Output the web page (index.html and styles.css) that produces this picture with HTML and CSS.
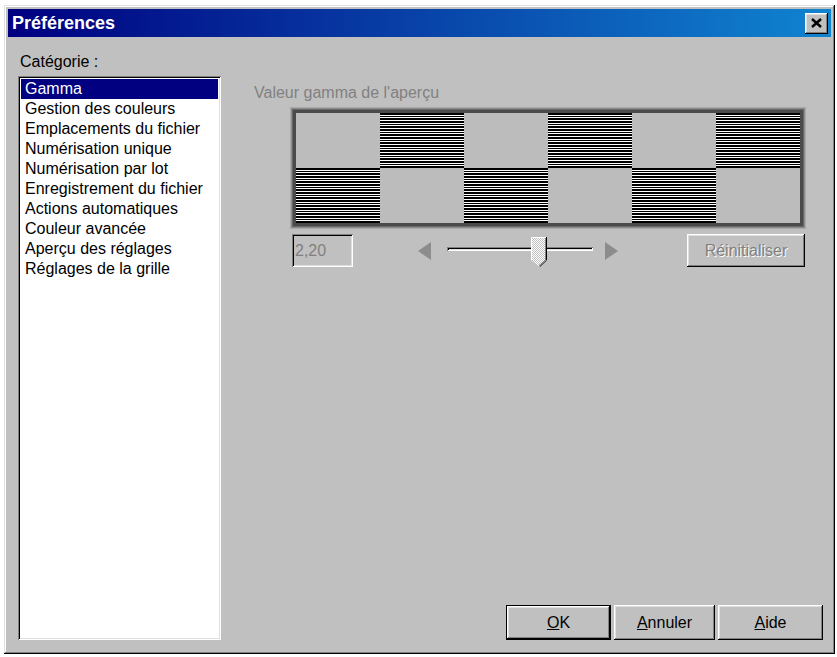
FILE: index.html
```html
<!DOCTYPE html>
<html lang="fr">
<head>
<meta charset="utf-8">
<title>Préférences</title>
<link rel="stylesheet" href="styles.css">
</head>
<body>
<div class="window">
  <div class="titlebar">
    <span class="title">Préférences</span>
    <div class="close">
      <svg width="11" height="10" viewBox="0 0 11 10"><path d="M1 1 L10 9 M10 1 L1 9" stroke="#000" stroke-width="2.5" fill="none"/></svg>
    </div>
  </div>
  <div class="body">
    <div class="left">
      <div class="label cat-label">Catégorie :</div>
      <ul class="listbox">
        <li class="item selected">Gamma</li>
        <li class="item">Gestion des couleurs</li>
        <li class="item">Emplacements du fichier</li>
        <li class="item">Numérisation unique</li>
        <li class="item">Numérisation par lot</li>
        <li class="item">Enregistrement du fichier</li>
        <li class="item">Actions automatiques</li>
        <li class="item">Couleur avancée</li>
        <li class="item">Aperçu des réglages</li>
        <li class="item">Réglages de la grille</li>
      </ul>
    </div>
    <div class="right">
      <div class="label preview-label">Valeur gamma de l'aperçu</div>
      <div class="gamma">
        <div class="preview">
          <div class="cell flat"></div>
          <div class="cell lines"></div>
          <div class="cell flat"></div>
          <div class="cell lines"></div>
          <div class="cell flat"></div>
          <div class="cell lines"></div>
          <div class="cell lines"></div>
          <div class="cell flat"></div>
          <div class="cell lines"></div>
          <div class="cell flat"></div>
          <div class="cell lines"></div>
          <div class="cell flat"></div>
        </div>
        <div class="controls">
          <div class="edit">2,20</div>
          <svg class="arrow arrow-left" width="13" height="18" viewBox="0 0 13 18"><polygon points="13,0 13,18 0,9" fill="#8c8c8c"/></svg>
          <div class="slider">
            <div class="track"></div>
            <svg class="thumb" width="16" height="30" viewBox="0 0 16 30">
              <defs>
                <pattern id="dither" width="2" height="2" patternUnits="userSpaceOnUse">
                  <rect width="2" height="2" fill="#fff"/>
                  <rect width="1" height="1" fill="#c0c0c0"/>
                  <rect x="1" y="1" width="1" height="1" fill="#c0c0c0"/>
                </pattern>
              </defs>
              <polygon points="0,0 16,0 16,23 9,30 8,30 0,23" fill="url(#dither)"/>
              <path d="M0.5 23 L0.5 0.5 L15 0.5" stroke="#fff" fill="none"/>
              <path d="M15.5 0 L15.5 23.2 L8.5 29.8" stroke="#000" fill="none"/>
              <path d="M14.5 1 L14.5 22.8 L8 28.6" stroke="#808080" fill="none"/>
            </svg>
          </div>
          <svg class="arrow arrow-right" width="13" height="18" viewBox="0 0 13 18"><polygon points="0,0 0,18 13,9" fill="#8c8c8c"/></svg>
          <div class="button reset">Réinitialiser</div>
        </div>
      </div>
      <div class="actions">
        <div class="button default"><u>O</u>K</div>
        <div class="button cancel"><u>A</u>nnuler</div>
        <div class="button help"><u>A</u>ide</div>
      </div>
    </div>
  </div>
</div>
</body>
</html>
```

FILE: styles.css
```css
* {
  box-sizing: border-box;
}

html,
body {
  margin: 0;
  background: #fff;
}

body {
  font-family: "Liberation Sans", Arial, sans-serif;
  font-size: 16px;
  color: #000;
}

/* dialog frame */
.window {
  margin: 5px 0 0 4px;
  width: 831px;
  height: 649px;
  padding: 4px;
  background: #c0c0c0;
  display: flex;
  flex-direction: column;
  box-shadow: inset -1px -1px #000, inset 1px 1px #dfdfdf,
    inset -2px -2px #808080, inset 2px 2px #fff;
}

.titlebar {
  height: 28px;
  flex: none;
  display: flex;
  align-items: center;
  justify-content: space-between;
  padding: 0 3px 0 4px;
  background: linear-gradient(to right, #000080, #1084d0);
}

.title {
  color: #fff;
  font-weight: bold;
  font-size: 18px;
}

.close {
  width: 23px;
  height: 21px;
  background: #c0c0c0;
  display: flex;
  align-items: center;
  justify-content: center;
  box-shadow: inset -1px -1px #000, inset 1px 1px #fff,
    inset -2px -2px #808080, inset 2px 2px #dfdfdf;
}

.close svg {
  display: block;
}

.body {
  flex: 1;
  min-height: 0;
  display: flex;
}

.label {
  line-height: 20px;
}

/* category list */
.left {
  width: 203px;
  margin-left: 10px;
  padding-bottom: 10px;
  display: flex;
  flex-direction: column;
}

.cat-label {
  margin-top: 15px;
  padding-left: 2px;
}

.listbox {
  flex: 1;
  margin: 4px 0 0;
  padding: 3px;
  list-style: none;
  background: #fff;
  box-shadow: inset 1px 1px #808080, inset -1px -1px #fff,
    inset 2px 2px #000, inset -2px -2px #dfdfdf;
}

.item {
  height: 20px;
  line-height: 20px;
  padding-left: 4px;
  white-space: nowrap;
}

.item.selected {
  background: #000080;
  color: #fff;
}

/* gamma panel */
.right {
  flex: 1;
  margin-left: 33px;
  padding: 0 8px 10px 0;
  display: flex;
  flex-direction: column;
}

.preview-label {
  margin-top: 46px;
  color: #808080;
}

.gamma {
  margin-left: 37px;
}

/* soft dark frame round the test pattern */
.preview {
  margin: 7px 0 0 2px;
  width: 510px;
  border: 3px solid #4a4a4a;
  box-shadow: 0 0 0 1px #686868, 0 0 0 2px #8c8c8c, 0 0 0 3px #a8a8a8;
  display: grid;
  grid-template-columns: repeat(6, 84px);
  grid-template-rows: 55px 55px;
}

.cell.flat {
  background: #bcbcbc;
}

.cell.lines {
  background: repeating-linear-gradient(
    to bottom,
    #000 0 2px,
    #fff 2px 3px,
    #000 3px 4px,
    #fff 4px 5px,
    #000 5px 7px,
    #fff 7px 8px
  );
}

.controls {
  margin-top: 8px;
  height: 33px;
  display: flex;
  align-items: center;
}

.edit {
  width: 61px;
  height: 33px;
  margin-left: 1px;
  padding-left: 3px;
  line-height: 33px;
  color: #808080;
  background: #c0c0c0;
  box-shadow: inset 1px 1px #808080, inset -1px -1px #fff,
    inset 2px 2px #000, inset -2px -2px #dfdfdf;
}

.arrow {
  display: block;
  flex: none;
}

.arrow-left {
  margin-left: 65px;
}

.slider {
  position: relative;
  width: 146px;
  height: 33px;
  margin-left: 16px;
}

.track {
  position: absolute;
  left: 0;
  right: 0;
  top: 13px;
  height: 4px;
  box-shadow: inset 1px 1px #808080, inset -1px -1px #fff,
    inset 2px 2px #000, inset -2px -2px #dfdfdf;
}

.thumb {
  position: absolute;
  left: 84px;
  top: 3px;
  display: block;
}

.arrow-right {
  margin-left: 12px;
}

/* push buttons */
.button {
  height: 33px;
  display: flex;
  align-items: center;
  justify-content: center;
  background: #c0c0c0;
  box-shadow: inset -1px -1px #000, inset 1px 1px #fff,
    inset -2px -2px #808080, inset 2px 2px #dfdfdf;
}

.reset {
  width: 118px;
  margin-left: 69px;
  color: #808080;
  text-shadow: 1px 1px #fff;
}

.actions {
  margin-top: auto;
  display: flex;
  justify-content: flex-end;
  gap: 3px;
}

.actions .button {
  height: 35px;
}

.default {
  width: 105px;
  border: 1px solid #000;
}

.cancel {
  width: 101px;
}

.help {
  width: 105px;
}
```
